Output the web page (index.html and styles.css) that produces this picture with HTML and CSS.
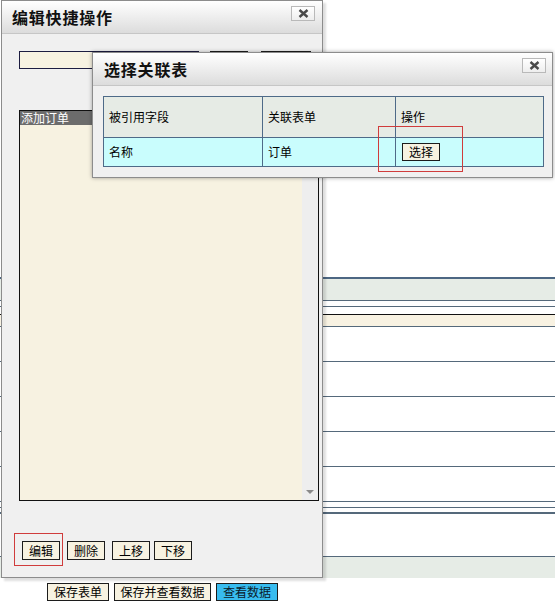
FILE: index.html
```html
<!DOCTYPE html>
<html lang="zh-CN">
<head>
<meta charset="utf-8">
<title>编辑快捷操作</title>
<link rel="stylesheet" href="styles.css">
</head>
<body>
<div class="page">
  <div class="page-blank"></div>
  <div class="grid">
    <div class="g-row g-head"></div>
    <div class="g-row g-h5"></div>
    <div class="g-row g-h7 g-dark"></div>
    <div class="g-row g-cream"></div>
    <div class="g-row g-tall"></div>
    <div class="g-row g-tall"></div>
    <div class="g-row g-tall"></div>
    <div class="g-row g-tall"></div>
    <div class="g-row g-tall"></div>
    <div class="g-row g-h5"></div>
    <div class="g-row g-h5 g-thick"></div>
    <div class="g-row g-wide"></div>
    <div class="g-row g-foot"></div>
  </div>
  <div class="page-actions">
    <button class="btn btn-save">保存表单</button>
    <button class="btn btn-save-view">保存并查看数据</button>
    <button class="btn btn-blue">查看数据</button>
  </div>
</div>

<section class="dialog dlg-edit">
  <header class="dlg-head">
    <h2 class="dlg-title">编辑快捷操作</h2>
    <button class="dlg-close" aria-label="关闭"><svg width="11" height="9" viewBox="0 0 11 9"><path d="M1.5 1 L9.5 8 M9.5 1 L1.5 8" stroke="#4a4a4a" stroke-width="2.4" fill="none"/></svg></button>
  </header>
  <div class="dlg-body edit-body">
    <div class="edit-top">
      <div class="field"></div>
      <button class="btn btn-a"></button>
      <button class="btn btn-b"></button>
    </div>
    <div class="listbox">
      <div class="list-items">
        <div class="list-item selected">添加订单</div>
      </div>
      <div class="list-scroll"><span class="scroll-arrow"></span></div>
    </div>
    <div class="edit-actions">
      <button class="btn marked mark-edit">编辑</button>
      <button class="btn">删除</button>
      <button class="btn">上移</button>
      <button class="btn">下移</button>
    </div>
  </div>
</section>

<section class="dialog dlg-pick">
  <header class="dlg-head">
    <h2 class="dlg-title">选择关联表</h2>
    <button class="dlg-close" aria-label="关闭"><svg width="11" height="9" viewBox="0 0 11 9"><path d="M1.5 1 L9.5 8 M9.5 1 L1.5 8" stroke="#4a4a4a" stroke-width="2.4" fill="none"/></svg></button>
  </header>
  <div class="dlg-body pick-body">
    <table class="pick-table">
      <thead>
        <tr><th class="c1">被引用字段</th><th class="c2">关联表单</th><th class="c3">操作</th></tr>
      </thead>
      <tbody>
        <tr><td>名称</td><td>订单</td><td><button class="btn marked mark-pick">选择</button></td></tr>
      </tbody>
    </table>
  </div>
</section>
</body>
</html>
```

FILE: styles.css
```css
* { box-sizing: border-box; }

html, body {
  margin: 0;
  padding: 0;
  background: #ffffff;
}

body {
  width: 555px;
  height: 610px;
  overflow: hidden;
  position: relative;
  font-family: "Noto Sans CJK SC", "Liberation Sans", sans-serif;
  font-size: 12px;
  color: #000;
}

/* ---------- buttons ---------- */
.btn {
  font: inherit;
  font-size: 12px;
  line-height: 16px;
  height: 18px;
  padding: 0;
  margin: 0;
  border: 1px solid #1c1c1c;
  border-radius: 0;
  background: #f7f2e1;
  color: #000;
  cursor: default;
}

.btn-save { width: 62px; }
.btn-save-view { width: 97px; }
.btn-blue {
  width: 62px;
  background: #38bcef;
  color: #0a1a2a;
}

.marked { position: relative; }
.marked::after {
  content: "";
  position: absolute;
  border: 1px solid #d03c3c;
  pointer-events: none;
}
.mark-edit::after { left: -9px; top: -9px; right: -4px; bottom: -7px; }
.mark-pick::after { left: -25px; top: -18px; right: -24px; bottom: -12px; }

/* ---------- background page ---------- */
.page-blank { height: 277px; }

.grid {
  border-top: 2px solid #4d6783;
}
.g-row { border-bottom: 1px solid #55697b; }
.g-head { height: 22px; background: #e6ece6; }
.g-h5 { height: 6px; }
.g-h7 { height: 8px; }
.g-dark { border-bottom-color: #111; }
.g-cream { height: 12px; background: #f8f2e2; }
.g-tall { height: 35px; }
.g-thick { border-bottom-width: 2px; }
.g-wide { height: 43px; }
.g-foot { height: 21px; background: #e6ece6; border-bottom: 0; }

.page-actions {
  display: flex;
  gap: 5px;
  padding: 5px 0 0 47px;
}

/* ---------- dialogs ---------- */
.dialog {
  position: absolute;
  background: #f0f0f0;
  border: 1px solid #8c8c8c;
}

.dlg-head {
  height: 33px;
  display: flex;
  align-items: center;
  justify-content: space-between;
  background: linear-gradient(#ffffff, #dcdcdc);
  border-bottom: 1px solid #c6c6c6;
}

.dlg-title {
  margin: 0;
  font-size: 16px;
  font-weight: bold;
  line-height: 20px;
  letter-spacing: 0.8px;
  color: #111;
}

.dlg-close {
  width: 24px;
  height: 15px;
  padding: 0;
  margin: 0;
  border: 1px solid #b9b9b9;
  background: linear-gradient(#ffffff, #eeeeee);
  display: flex;
  align-items: center;
  justify-content: center;
  align-self: flex-start;
  margin-top: 5px;
}

/* edit dialog */
.dlg-edit {
  left: 1px;
  top: 0;
  width: 322px;
  box-shadow: 3px 3px 2px rgba(0, 0, 0, 0.13);
}
.dlg-edit .dlg-head { padding: 0 7px 0 10px; }

.edit-body {
  padding: 17px 3px 17px 17px;
}

.edit-top {
  display: flex;
  height: 18px;
}
.field {
  width: 180px;
  height: 18px;
  border: 1px solid #1c1c40;
  background: #f7f2e1;
}
.btn-a { width: 38px; margin-left: 11px; }
.btn-b { width: 50px; margin-left: 13px; }

.listbox {
  margin-top: 41px;
  width: 300px;
  height: 391px;
  border: 1px solid #111;
  display: flex;
  background: #f7f2e1;
}
.list-items { flex: 1; }
.list-item {
  height: 14px;
  line-height: 14px;
  padding-left: 1px;
  white-space: nowrap;
}
.list-item.selected {
  background: #6c6c6c;
  color: #fff;
}
.list-scroll {
  width: 16px;
  background: #eeeeee;
  display: flex;
  align-items: flex-end;
  justify-content: center;
  padding-bottom: 6px;
}
.scroll-arrow {
  width: 0;
  height: 0;
  border-left: 4px solid transparent;
  border-right: 4px solid transparent;
  border-top: 4px solid #8a8a8a;
}

.edit-actions {
  margin-top: 40px;
  display: flex;
  align-items: center;
  padding-left: 3px;
}
.edit-actions .btn { height: 19px; width: 38px; margin-right: 7px; }
.edit-actions .btn:nth-child(3) { margin-right: 4px; }

/* pick dialog */
.dlg-pick {
  left: 92px;
  top: 52px;
  width: 461px;
  box-shadow: 0 0 4px rgba(0, 0, 0, 0.35);
}
.dlg-pick .dlg-head { padding: 0 6px 0 11px; }

.pick-body { padding: 10px; }

.pick-table {
  border-collapse: collapse;
  width: 440px;
  table-layout: fixed;
}
.pick-table th,
.pick-table td {
  border: 1px solid #4e6a88;
  text-align: left;
  font-weight: normal;
  padding: 0 0 0 5px;
  line-height: 16px;
  white-space: nowrap;
}
.pick-table th { height: 41px; background: #e6ebe5; }
.pick-table td { height: 29px; background: #c9fdfd; }
.pick-table .c1 { width: 159px; }
.pick-table .c2 { width: 133px; }
.pick-table .c3 { width: 148px; }
.pick-table td .btn { margin-left: 1px; width: 38px; }
```
